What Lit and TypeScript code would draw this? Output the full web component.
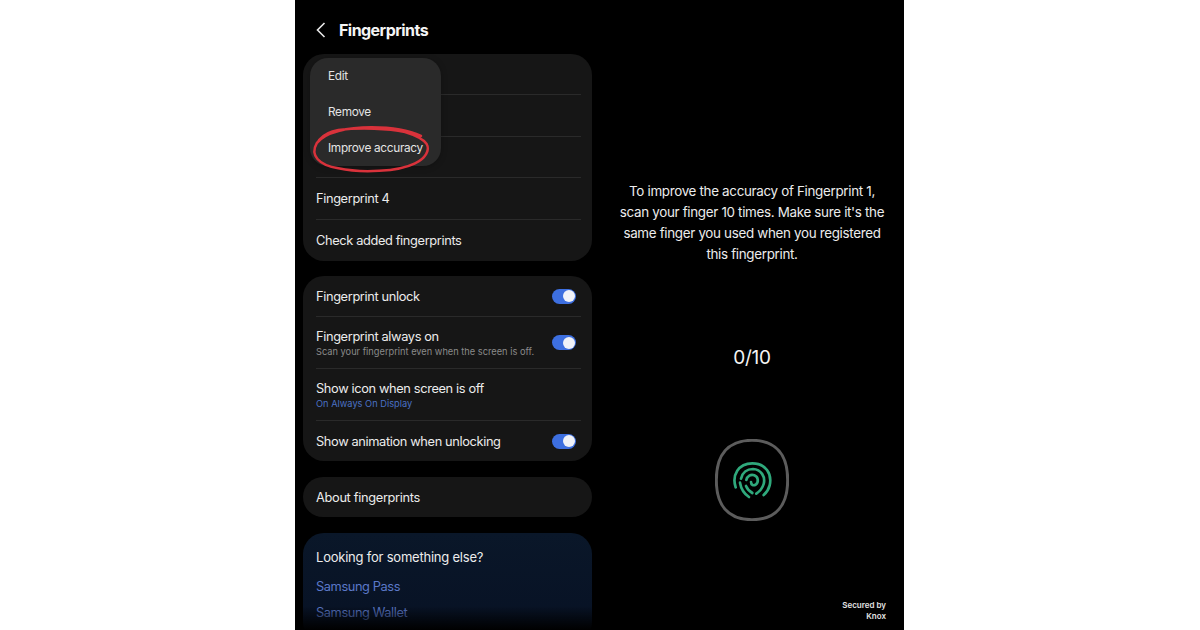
import { LitElement, html, css } from "lit";
import { customElement } from "lit/decorators.js";

@customElement("app-root")
export class AppRoot extends LitElement {
  static styles = css`
    :host { display: block; width: 1200px; height: 630px; background: #fff; font-family: "Inter", "Liberation Sans", sans-serif; overflow: hidden; }
    * { box-sizing: border-box; }
    .phone { position: relative; width: 609px; height: 630px; margin-left: 295px; background: #000; display: flex; overflow: hidden; color: #f2f2f2; }
    .left { width: 297px; flex: none; padding-left: 8px; display: flex; flex-direction: column; }
    .head { height: 54px; flex: none; display: flex; align-items: center; gap: 12px; padding: 6px 0 0 12px; }
    .back { width: 12px; height: 20px; flex: none; }
    h1 { margin: 0; font-size: 16px; font-weight: 700; color: #f4f4f4; letter-spacing: -0.55px; }
    .card { width: 289px; background: #161616; border-radius: 21px; padding: 0 11px 0 13px; flex: none; }
    .c1 { height: 207px; margin-bottom: 15px; position: relative; }
    .c2 { height: 185px; margin-bottom: 16px; }
    .c3 { height: 40px; margin-bottom: 16px; display: flex; align-items: center; font-size: 12.8px; letter-spacing: -0.32px; color: #ececec; }
    .row { display: flex; align-items: center; justify-content: space-between; font-size: 12.8px; letter-spacing: -0.36px; color: #ececec; border-bottom: 1px solid #2a2a2a; }
    .row.last { border-bottom: 0; }
    .c1 .row { height: 41.4px; }
    .h41 { height: 41px; }
    .h41.last { padding-bottom: 1px; }
    .h52 { height: 52px; }
    .sub { font-size: 9.25px; letter-spacing: 0; color: #8b8b8b; margin-top: 2px; white-space: nowrap; }
    .sub.blue { color: #4a71c4; }
    .tog { position: relative; width: 24px; height: 15px; border-radius: 8px; background: #3d6fe0; flex: none; margin-right: 5px; }
    .tog::after { content: ""; position: absolute; right: 1px; top: 1.5px; width: 12px; height: 12px; border-radius: 50%; background: #f0f2f8; }
    .c4 { height: 110px; padding-top: 16px; background: linear-gradient(180deg, #0a1729, #071124); }
    .c4 .q { color: #ececec; margin-bottom: 13px; font-size: 13px; letter-spacing: -0.22px; }
    .link { color: #5b78c8; height: 26px; font-size: 12.8px; letter-spacing: -0.4px; line-height: 18px; }
    .fade { position: absolute; left: 0; bottom: 0; width: 297px; height: 24px; background: linear-gradient(180deg, rgba(0,0,0,0), #000); pointer-events: none; }
    .menu { position: absolute; left: 7px; top: 4px; width: 131px; height: 108px; border-radius: 18px; background: #2a2a2a; padding: 0 0 0 18px; display: flex; flex-direction: column; justify-content: space-around; font-size: 11.8px; letter-spacing: -0.3px; color: #e4e4e4; box-shadow: 0 1px 6px rgba(0,0,0,.25); }
    .menu div { line-height: 36px; white-space: nowrap; }
    .ring { position: absolute; left: 0; top: 0; width: 310px; height: 270px; pointer-events: none; }
    .right { flex: 1; display: flex; flex-direction: column; align-items: center; padding: 181px 0 0 8px; position: relative; }
    .msg { width: 270px; margin: 0; text-align: center; font-size: 13.4px; letter-spacing: -0.32px; line-height: 21px; color: #ececec; }
    .count { margin-top: 81px; font-size: 19px; letter-spacing: -0.2px; line-height: 24px; color: #f4f4f4; }
    .fp { margin-top: 69px; width: 74px; height: 82px; }
    .knox { position: absolute; right: 18px; top: 600px; font-size: 8px; line-height: 11px; font-weight: 600; text-align: right; color: #e4e4e4; }
  `;

  render() {
    return html`<div class="phone">
      <div class="left">
        <div class="head">
          <svg class="back" viewBox="0 0 12 20"><path d="M9.5 3 L2.5 10 L9.5 17" fill="none" stroke="#e8e8e8" stroke-width="1.6"/></svg>
          <h1>Fingerprints</h1>
        </div>
        <div class="card c1">
          <div class="row"></div>
          <div class="row"></div>
          <div class="row"></div>
          <div class="row">Fingerprint 4</div>
          <div class="row last">Check added fingerprints</div>
          <div class="menu"><div>Edit</div><div>Remove</div><div>Improve accuracy</div></div>
        </div>
        <div class="card c2">
          <div class="row h41"><span>Fingerprint unlock</span><i class="tog"></i></div>
          <div class="row h52"><div><div>Fingerprint always on</div><div class="sub">Scan your fingerprint even when the screen is off.</div></div><i class="tog"></i></div>
          <div class="row h52"><div><div>Show icon when screen is off</div><div class="sub blue">On Always On Display</div></div></div>
          <div class="row h41 last"><span>Show animation when unlocking</span><i class="tog"></i></div>
        </div>
        <div class="card c3">About fingerprints</div>
        <div class="card c4">
          <div class="q">Looking for something else?</div>
          <div class="link">Samsung Pass</div>
          <div class="link">Samsung Wallet</div>
        </div>
      </div>
      <div class="right">
        <p class="msg">To improve the accuracy of Fingerprint 1, scan your finger 10 times. Make sure it's the same finger you used when you registered this fingerprint.</p>
        <div class="count">0/10</div>
        <svg class="fp" viewBox="0 0 222 246">
          <path d="M111 4 C185 4 218 50 218 123 C218 196 185 242 111 242 C37 242 4 196 4 123 C4 50 37 4 111 4 Z" fill="none" stroke="#5c5c5c" stroke-width="9"/>
          <g fill="none" stroke="#2fa97c" stroke-width="8" stroke-linecap="round" transform="translate(-44 -27)">
            <path d="M106 172 C94 136 114 100 156 100 C196 100 216 132 208 166 C205 178 198 188 190 195"/>
            <path d="M122 146 C126 128 140 117 158 117 C182 118 196 140 190 162 C186 176 178 184 168 191"/>
            <path d="M119 158 C122 176 130 190 146 201"/>
            <path d="M137 168 C141 178 148 184 156 189"/>
            <path d="M138 150 C140 138 152 132 162 136 C174 141 176 156 166 164 C160 168 152 165 152 156"/>
          </g>
        </svg>
        <div class="knox">Secured by<br />Knox</div>
      </div>
      <svg class="ring" viewBox="0 0 930 810">
        <path d="M378 408 C340 390 290 382 230 382 C160 382 90 395 65 430 C45 465 70 495 130 505 C200 520 310 515 360 490 C392 475 405 450 395 432 C385 418 360 405 330 396 C280 386 200 382 130 390 C100 395 85 405 72 420" fill="none" stroke="#d9323b" stroke-width="7.5" stroke-linecap="round"/>
      </svg>
      <div class="fade"></div>
    </div>`;
  }
}
